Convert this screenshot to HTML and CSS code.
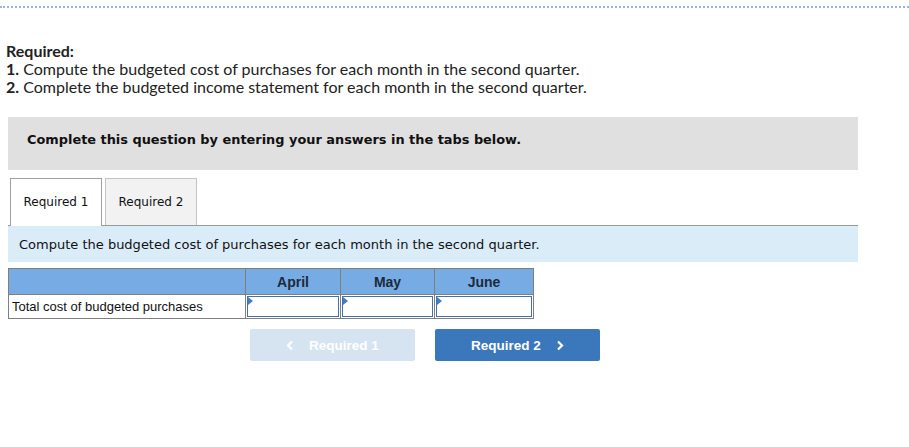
FILE: index.html
```html
<!DOCTYPE html>
<html>
<head>
<meta charset="utf-8">
<link rel="stylesheet" href="styles.css">
</head>
<body>
<div class="topline"></div>
<div class="required">
  <div class="req-title">Required:</div>
  <div class="req-line"><b>1.</b> Compute the budgeted cost of purchases for each month in the second quarter.</div>
  <div class="req-line"><b>2.</b> Complete the budgeted income statement for each month in the second quarter.</div>
</div>
<div class="notice">Complete this question by entering your answers in the tabs below.</div>
<div class="tabs">
  <div class="tab active">Required 1</div>
  <div class="tab">Required 2</div>
</div>
<div class="instruction">Compute the budgeted cost of purchases for each month in the second quarter.</div>
<table class="grid">
  <thead>
    <tr><th class="label-col"></th><th class="c-apr">April</th><th class="c-may">May</th><th class="c-jun">June</th></tr>
  </thead>
  <tbody>
    <tr>
      <td class="label">Total cost of budgeted purchases</td>
      <td class="cell"><div class="input"><span class="flag"></span></div></td>
      <td class="cell"><div class="input"><span class="flag"></span></div></td>
      <td class="cell"><div class="input"><span class="flag"></span></div></td>
    </tr>
  </tbody>
</table>
<div class="nav">
  <div class="btn prev"><svg class="chev" width="8" height="11" viewBox="0 0 8 11"><path d="M6 1.5 L2 5.5 L6 9.5" fill="none" stroke="#fff" stroke-width="2.2"/></svg>Required 1</div>
  <div class="btn next">Required 2<svg class="chev" width="8" height="11" viewBox="0 0 8 11"><path d="M2 1.5 L6 5.5 L2 9.5" fill="none" stroke="#fff" stroke-width="2.2"/></svg></div>
</div>
</body>
</html>
```
FILE: styles.css
```css
html, body {
  margin: 0;
  padding: 0;
  background: #fff;
}
.topline {
  margin-top: 6px;
  border-top: 2px dotted #9ab6dc;
}
.required {
  margin-top: 34px;
  padding-left: 6px;
  font-family: "Lato", "Liberation Sans", sans-serif;
  font-size: 16px;
  line-height: 18px;
  color: #222;
}
.req-title {
  font-weight: bold;
}
.notice {
  margin: 21px 51px 0 8px;
  height: 53px;
  background: #e0e0e0;
  box-sizing: border-box;
  padding-left: 19px;
  padding-bottom: 9px;
  display: flex;
  align-items: center;
  font-family: "DejaVu Sans", Verdana, sans-serif;
  font-weight: bold;
  font-size: 12.9px;
  color: #111;
}
.tabs {
  margin: 8px 51px 0 8px;
  padding-left: 2px;
  display: flex;
  align-items: flex-start;
  gap: 3px;
  border-bottom: 1px solid #9a9a9a;
}
.tab {
  width: 92px;
  height: 47px;
  box-sizing: border-box;
  border: 1px solid #c4c4c4;
  border-bottom: none;
  background: #f2f2f2;
  display: flex;
  align-items: center;
  justify-content: center;
  font-family: "DejaVu Sans", Verdana, sans-serif;
  font-size: 12px;
  color: #111;
}
.tab.active {
  background: #fff;
  border-color: #a0a0a0;
  height: 48px;
  padding-bottom: 1px;
  margin-bottom: -1px;
}
.instruction {
  margin: 0 51px 0 8px;
  height: 36px;
  background: #dbecf9;
  box-sizing: border-box;
  padding-left: 11px;
  display: flex;
  align-items: center;
  font-family: "DejaVu Sans", Verdana, sans-serif;
  font-size: 13px;
  color: #111;
}
.grid {
  margin: 6px 0 0 8px;
  border-collapse: collapse;
  font-family: "Liberation Sans", Arial, sans-serif;
}
.grid th, .grid td {
  border: 1px solid #7f7f7f;
  padding: 0;
}
.grid th {
  background: #77abe3;
  height: 25px;
  font-size: 14px;
  font-weight: bold;
  color: #1d2a3a;
}
.label-col { width: 236px; }
.c-apr { width: 94px; }
.c-may { width: 93px; }
.c-jun { width: 98px; }
.grid td {
  height: 23px;
}
.label {
  font-size: 13px;
  color: #111;
  padding-left: 3px !important;
  text-align: left;
}
.cell {
  position: relative;
}
.input {
  position: absolute;
  inset: 1px;
  border: 1px solid #4471a8;
  background: #fff;
}
.flag {
  position: absolute;
  left: 0;
  top: 0;
  width: 0;
  height: 0;
  border-top: 4px solid transparent;
  border-bottom: 4px solid transparent;
  border-left: 5px solid #3f7dc6;
}
.nav {
  margin: 10px 0 0 250px;
  display: flex;
  gap: 20px;
}
.btn {
  width: 165px;
  height: 32px;
  border-radius: 2px;
  display: flex;
  align-items: center;
  justify-content: center;
  font-family: "Liberation Sans", Arial, sans-serif;
  font-weight: bold;
  font-size: 13.5px;
  color: #fff;
}
.btn.prev {
  background: #d6e3f1;
}
.btn.next {
  background: #3a77bb;
}
.chev {
  display: block;
}
.prev .chev { margin-right: 15px; }
.next .chev { margin-left: 15px; }
```
